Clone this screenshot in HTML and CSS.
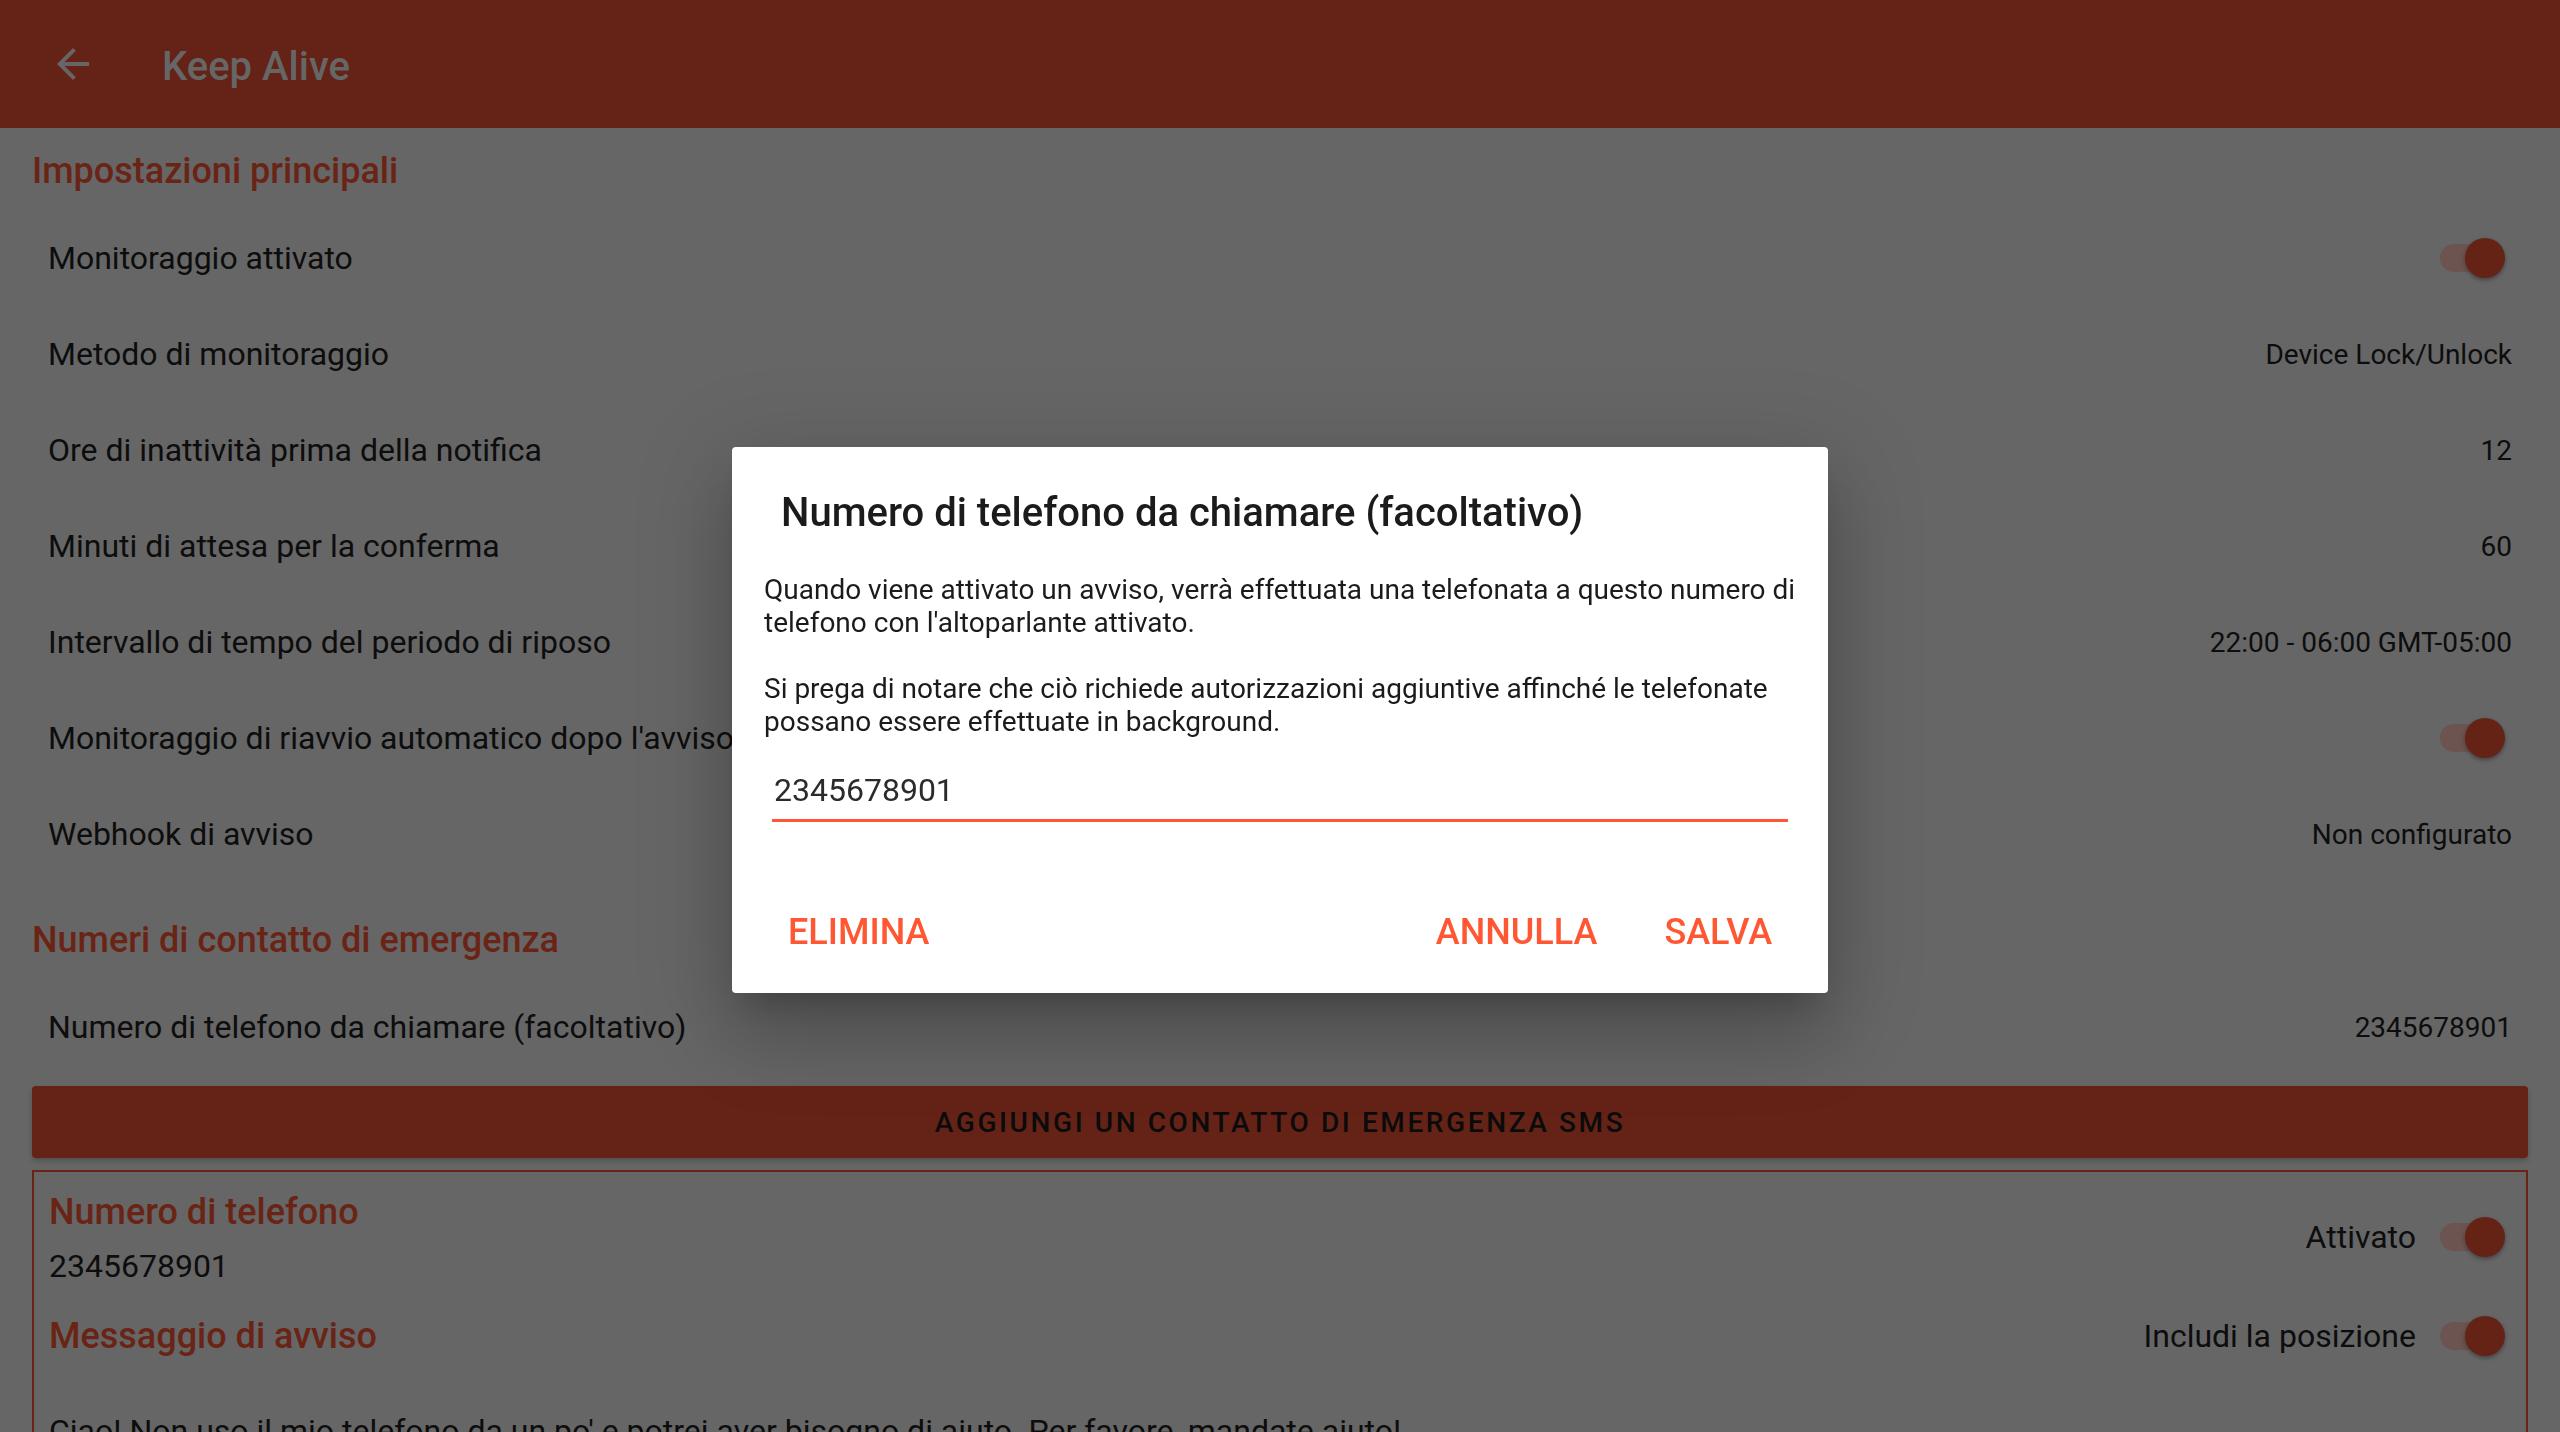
FILE: index.html
```html
<!DOCTYPE html>
<html lang="it">
<head>
<meta charset="utf-8">
<title>Keep Alive</title>
<link rel="stylesheet" href="styles.css">
</head>
<body>
<div class="app">
  <header class="appbar">
    <span class="back">
      <svg viewBox="0 0 24 24" width="48" height="48"><path d="M20 11H7.83l5.59-5.59L12 4l-8 8 8 8 1.41-1.41L7.83 13H20v-2z" fill="currentColor"/></svg>
    </span>
    <h1 class="appbar-title">Keep Alive</h1>
  </header>

  <main class="content">
    <h2 class="section-title first">Impostazioni principali</h2>
    <div class="row"><span class="label">Monitoraggio attivato</span><span class="switch"><span class="track"></span><span class="thumb"></span></span></div>
    <div class="row"><span class="label">Metodo di monitoraggio</span><span class="value">Device Lock/Unlock</span></div>
    <div class="row"><span class="label">Ore di inattività prima della notifica</span><span class="value">12</span></div>
    <div class="row"><span class="label">Minuti di attesa per la conferma</span><span class="value">60</span></div>
    <div class="row"><span class="label">Intervallo di tempo del periodo di riposo</span><span class="value">22:00 - 06:00 GMT-05:00</span></div>
    <div class="row"><span class="label">Monitoraggio di riavvio automatico dopo l'avviso</span><span class="switch"><span class="track"></span><span class="thumb"></span></span></div>
    <div class="row"><span class="label">Webhook di avviso</span><span class="value">Non configurato</span></div>

    <h2 class="section-title">Numeri di contatto di emergenza</h2>
    <div class="row"><span class="label">Numero di telefono da chiamare (facoltativo)</span><span class="value">2345678901</span></div>

    <button class="add-btn">AGGIUNGI UN CONTATTO DI EMERGENZA SMS</button>

    <section class="card">
      <div class="card-left">
        <div class="card-title">Numero di telefono</div>
        <div class="card-number">2345678901</div>
      </div>
      <div class="card-toggle"><span class="toggle-label">Attivato</span><span class="switch"><span class="track"></span><span class="thumb"></span></span></div>
      <div class="card-title second">Messaggio di avviso</div>
      <div class="card-toggle second"><span class="toggle-label">Includi la posizione</span><span class="switch"><span class="track"></span><span class="thumb"></span></span></div>
      <p class="card-message">Ciao! Non uso il mio telefono da un po' e potrei aver bisogno di aiuto. Per favore, mandate aiuto!</p>
    </section>
  </main>

  <div class="overlay">
    <div class="dialog">
      <h3 class="dialog-title">Numero di telefono da chiamare (facoltativo)</h3>
      <p class="dialog-body">Quando viene attivato un avviso, verrà effettuata una telefonata a questo numero di telefono con l'altoparlante attivato.<br><br>Si prega di notare che ciò richiede autorizzazioni aggiuntive affinché le telefonate possano essere effettuate in background.</p>
      <div class="dialog-input">2345678901</div>
      <div class="dialog-actions">
        <button class="text-btn">ELIMINA</button>
        <span class="spacer"></span>
        <button class="text-btn">ANNULLA</button>
        <button class="text-btn">SALVA</button>
      </div>
    </div>
  </div>
</div>
</body>
</html>
```

FILE: styles.css
```css
* { box-sizing: border-box; }

html, body {
  margin: 0;
  padding: 0;
  width: 2560px;
  height: 1432px;
  overflow: hidden;
  background: #666666;
  font-family: Roboto, "Noto Sans", "Liberation Sans", sans-serif;
  color: #0d0d0d;
}

.app {
  width: 2560px;
  height: 1432px;
  display: flex;
  flex-direction: column;
  overflow: hidden;
}

.appbar {
  height: 128px;
  flex: none;
  background: #642316;
  display: flex;
  align-items: center;
  padding-left: 49px;
  color: #666666;
}

.back {
  width: 48px;
  height: 48px;
  display: flex;
}

.appbar-title {
  margin: 5px 0 0 65px;
  font-size: 40px;
  font-weight: 500;
  line-height: 48px;
  color: #666666;
}

.content {
  padding: 0 32px;
  display: flex;
  flex-direction: column;
}

.section-title {
  margin: 34px 0 15px;
  font-size: 36px;
  line-height: 48px;
  font-weight: 500;
  color: #6a2416;
}

.section-title.first {
  margin-top: 19px;
}

.row {
  height: 96px;
  display: flex;
  align-items: center;
  justify-content: space-between;
  padding: 0 16px;
}

.label {
  font-size: 32px;
  color: #0d0d0d;
  white-space: nowrap;
}

.value {
  font-size: 28px;
  color: #0d0d0d;
}

.switch {
  position: relative;
  width: 65px;
  height: 40px;
  margin-right: 7px;
  flex: none;
}

.track {
  position: absolute;
  left: 0;
  top: 6px;
  width: 60px;
  height: 28px;
  border-radius: 14px;
  background: #6c5450;
}

.thumb {
  position: absolute;
  right: 0;
  top: 0;
  width: 40px;
  height: 40px;
  border-radius: 50%;
  background: #652316;
  box-shadow: 0 2px 4px rgba(0, 0, 0, 0.35);
}

.add-btn {
  margin-top: 11px;
  height: 72px;
  border: none;
  border-radius: 4px;
  background: #642316;
  box-shadow: 0 3px 5px rgba(0, 0, 0, 0.2);
  font-family: inherit;
  font-size: 28px;
  font-weight: 500;
  letter-spacing: 2.6px;
  color: #0b0b0b;
  padding: 0;
}

.card {
  margin-top: 12px;
  border: 2px solid #6a2416;
  padding: 16px 21px 0 15px;
  display: grid;
  grid-template-columns: 1fr auto;
  align-items: center;
  height: 400px;
  align-content: start;
}

.card-title {
  font-size: 36px;
  line-height: 48px;
  font-weight: 500;
  color: #6a2416;
}

.card-title.second {
  margin-top: 27px;
}

.card-number {
  margin-top: 11px;
  font-size: 32px;
}

.card-toggle {
  display: flex;
  align-items: center;
  justify-self: end;
  gap: 24px;
}

.card-toggle.second {
  margin-top: 27px;
}

.card-toggle .switch {
  margin-right: 0;
}

.toggle-label {
  font-size: 32px;
}

.card-message {
  grid-column: 1 / -1;
  margin: 52px 0 0;
  font-size: 32px;
}

.overlay {
  position: fixed;
  inset: 0;
  display: flex;
  align-items: center;
  justify-content: center;
  padding-top: 8px;
}

.dialog {
  width: 1096px;
  background: #ffffff;
  border-radius: 4px;
  box-shadow: 0 22px 30px -14px rgba(0, 0, 0, 0.2), 0 48px 76px 6px rgba(0, 0, 0, 0.14), 0 18px 92px 16px rgba(0, 0, 0, 0.12);
  padding: 42px 0 40px;
  display: flex;
  flex-direction: column;
}

.dialog-title {
  margin: 0;
  padding: 0 48px 0 49px;
  font-size: 40px;
  font-weight: 500;
  color: #1b1b1b;
}

.dialog-body {
  margin: 37px 0 0;
  padding: 0 32px;
  font-size: 28px;
  color: #1b1b1b;
}

.dialog-input {
  margin: 33px 40px 0;
  padding: 0 0 10px 2px;
  font-size: 32px;
  color: #2b2b2b;
  border-bottom: 3px solid #ff5733;
}

.dialog-actions {
  margin-top: 89px;
  padding: 0 40px;
  display: flex;
  align-items: center;
  gap: 35px;
}

.spacer {
  flex: 1;
}

.text-btn {
  border: none;
  background: none;
  padding: 0 16px;
  font-family: inherit;
  font-size: 36px;
  font-weight: 500;
  color: #ff5733;
  line-height: normal;
}
```
